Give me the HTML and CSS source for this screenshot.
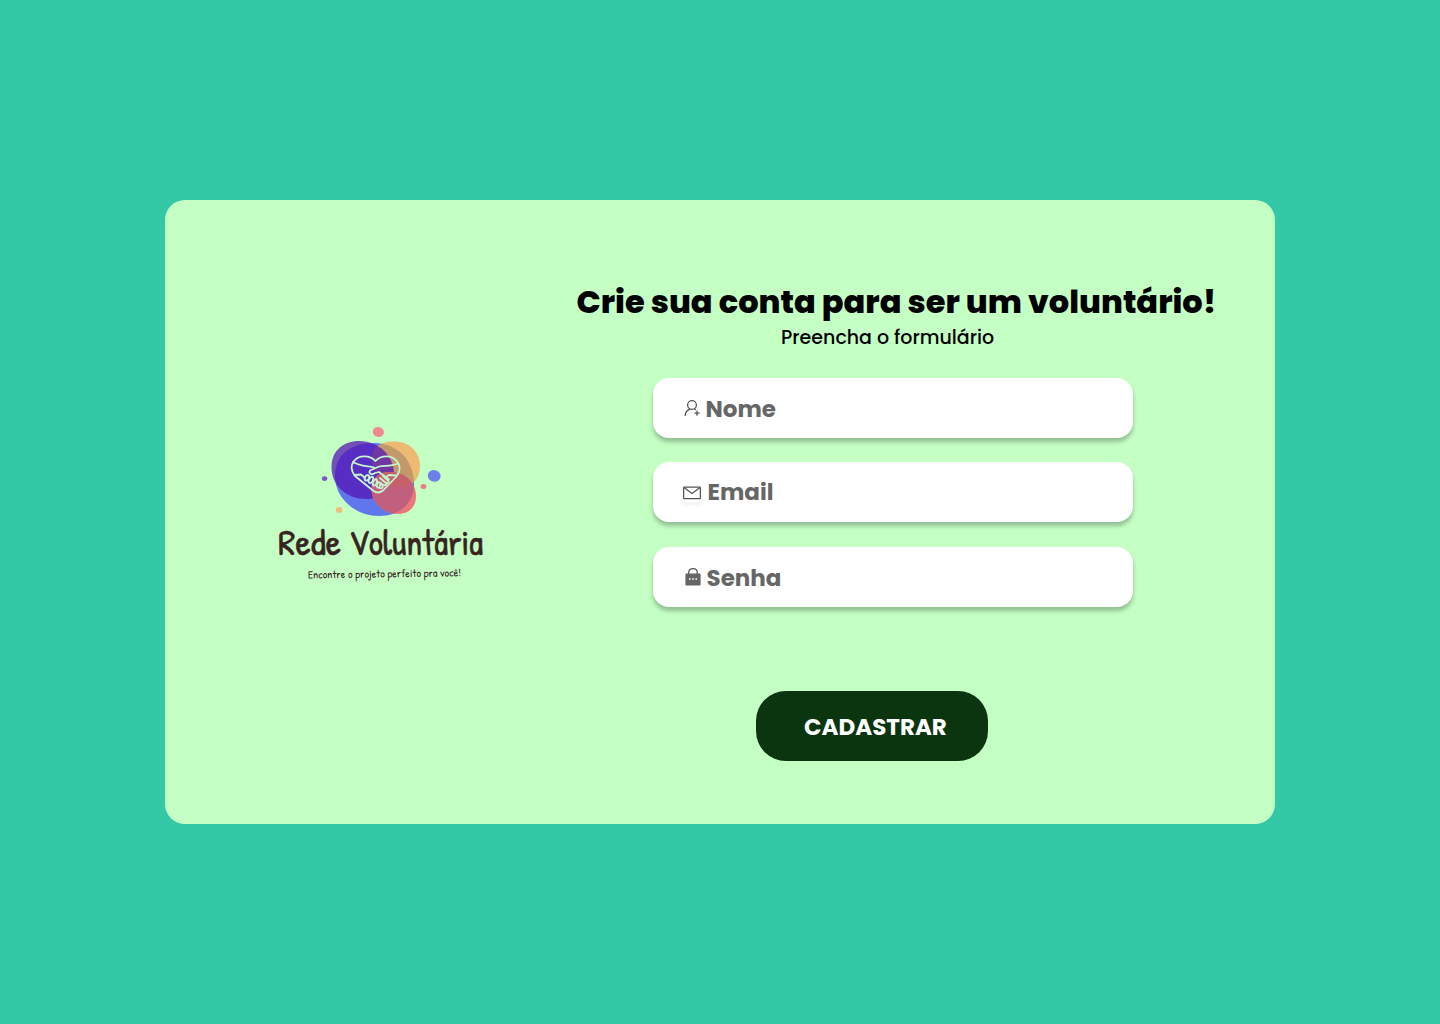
FILE: index.html
```html
<!DOCTYPE html>
<html lang="pt-BR">
<head>
<meta charset="utf-8">
<title>Rede Voluntária</title>
<link rel="stylesheet" href="styles.css">
</head>
<body>
<main class="card">
  <svg class="logo" viewBox="270 420 220 165" role="img" aria-label="Rede Voluntária">
    <defs>
      <clipPath id="blue-clip"><path d="M335 476C335 455 350 443 374 443C397 443 414 460 414 484C414 503 400 516 379 516C356 516 335 499 335 476Z"/></clipPath>
      <clipPath id="orange-clip"><path d="M372 458C372 447 382 441.500 394 441.500C409 441.500 420 451 420 467C420 480 411 487 399 487C384 487 372 474 372 458Z"/></clipPath>
    </defs>
    <path fill="#6175ed" d="M335 476C335 455 350 443 374 443C397 443 414 460 414 484C414 503 400 516 379 516C356 516 335 499 335 476Z"/>
    <path fill="#ecba73" d="M372 458C372 447 382 441.500 394 441.500C409 441.500 420 451 420 467C420 480 411 487 399 487C384 487 372 474 372 458Z"/>
    <path fill="#c3986b" clip-path="url(#blue-clip)" d="M372 458C372 447 382 441.500 394 441.500C409 441.500 420 451 420 467C420 480 411 487 399 487C384 487 372 474 372 458Z"/>
    <path fill="#5414b4" fill-opacity=".74" d="M331.500 466C332 450 344 441 359 441C379 441 394 456 394 474C394 490 382 499 366 499C347 499 331 486 331.500 466Z"/>
    <path fill="#e9777c" d="M371.500 489C371.500 478 379 472 390 472C404 472 416 482 416 496C416 507 409 514 398 514C384 514 371.500 503 371.500 489Z"/>
    <path fill="#c0607e" clip-path="url(#blue-clip)" d="M371.500 489C371.500 478 379 472 390 472C404 472 416 482 416 496C416 507 409 514 398 514C384 514 371.500 503 371.500 489Z"/>
    <path fill="#c8606c" clip-path="url(#orange-clip)" d="M371.500 489C371.500 478 379 472 390 472C404 472 416 482 416 496C416 507 409 514 398 514C384 514 371.500 503 371.500 489Z"/>
    <ellipse fill="#ef898e" cx="378.300" cy="432" rx="5.600" ry="5" transform="rotate(15 378.300 432)"/>
    <ellipse fill="#6e7eea" cx="434.200" cy="475.900" rx="6.500" ry="5.800" transform="rotate(20 434.200 475.900)"/>
    <ellipse fill="#ec7c83" cx="423.500" cy="486.500" rx="2.900" ry="2.500"/>
    <ellipse fill="#8354c6" cx="324.600" cy="478.600" rx="2.700" ry="2.400"/>
    <ellipse fill="#efbd7d" cx="339.200" cy="510" rx="3.300" ry="3"/>
    <g class="logo-line">
      <path d="M375.500 461C370 455 359 454.500 354 461C350 466 352 472 355 476L373 490.500Q378 494.500 383 490.500L396 477C400 472 401 466 397 461.500C392 454.500 381 455 375.500 461Z"/>
      <path d="M353 462C359 466 368 466 374 467.500M398 463.500C390 467 384 465 379 466.500L370 470.500C368 474 372 475 375 473L379 472L389 479.500M354.500 475L361 474.500L365 478M396 475.500L389 475L386 477"/>
      <path d="M368 475C365 475 363.500 479 365.500 480.500C368 481 371 477 368 475ZM372 476.500C369 478 367.500 482 369.500 483C372 483.500 375 478 372 476.500ZM376 479C373 480.500 371.500 484 373.500 485.500C376 486 378.500 480.500 376 479ZM379 482C376.500 484 376 486 377.500 487.500C380 488 381.500 483 379 482ZM380 478L386.500 483.500C386 486 383.500 486 381 483M383 476L388.500 481C389 483 387 484 385.500 482.500M382 485C384 488 381 489 379 487.500"/>
    </g>
    <text class="logo-name" y="554.500"><tspan x="278" textLength="63" lengthAdjust="spacingAndGlyphs">Rede</tspan><tspan x="349" textLength="134" lengthAdjust="spacingAndGlyphs">Voluntária</tspan></text>
    <text class="logo-tag" x="308" y="577.500" textLength="153" lengthAdjust="spacingAndGlyphs" transform="rotate(-.8 384 577)">Encontre o projeto perfeito pra você!</text>
  </svg>

  <form class="signup">
    <h1 class="title">Crie sua conta para ser um voluntário!</h1>
    <p class="subtitle">Preencha o formulário</p>
    <div class="fields">
      <div class="field field-name">
        <svg class="icon" viewBox="0 0 20 20"><circle cx="10" cy="7" r="4.400"/><path d="M3.200 17.900C3.200 14.200 5.500 11.900 8.300 11.100M12.500 10.900L13.800 11.900M15 12.700V17.700M12.400 15.200H17.600"/></svg>
        <span class="label">Nome</span>
      </div>
      <div class="field field-email">
        <svg class="icon icon-mail" viewBox="0 0 20 20"><rect x="1.600" y="5.100" width="16.800" height="11.600" rx=".7"/><path d="M2 5.500L10 11.500L18 5.500"/></svg>
        <span class="label">Email</span>
      </div>
      <div class="field field-password">
        <svg class="icon" viewBox="0 0 20 20"><path d="M5.700 8V5.700C5.700 .2 14.300 .2 14.300 5.700V8"/><rect class="lock-body" x="2.400" y="6.500" width="15.200" height="12" rx="1"/><path class="lock-dots" d="M6 12h1.600M9.200 12h1.600M12.400 12h1.600"/></svg>
        <span class="label">Senha</span>
      </div>
    </div>
    <button class="submit" type="button"><span class="submit-text">CADASTRAR</span></button>
  </form>
</main>
</body>
</html>
```

FILE: styles.css
```css
* { box-sizing: border-box; }

body {
  margin: 0;
  min-height: 100vh;
  display: flex;
  align-items: center;
  justify-content: center;
  background: #33c9a7;
  font-family: Poppins, Inter, sans-serif;
}

.card {
  width: 1110px;
  height: 624px;
  display: flex;
  align-items: flex-start;
  background: #c4ffc4;
  border-radius: 20px;
}

.logo {
  flex: none;
  width: 220px;
  height: 165px;
  margin: 220px 0 0 105px;
}

.logo-line {
  fill: none;
  stroke: #c4f5cc;
  stroke-width: 1.8;
  stroke-linecap: round;
  stroke-linejoin: round;
}

.logo-name, .logo-tag {
  fill: #38231f;
  font-family: "Patrick Hand", Poppins, Inter, sans-serif;
}
.logo-name {
  font-size: 35.500px;
  stroke: #38231f;
  stroke-width: .5;
}
.logo-tag { font-size: 11px; }

.signup {
  width: 640px;
  margin: 80px 0 0 87px;
  display: flex;
  flex-direction: column;
  align-items: flex-start;
}

.title {
  margin: 0 0 0 -.5px;
  height: 44px;
  line-height: 44px;
  font-size: 32px;
  font-weight: 800;
  white-space: nowrap;
  color: #000;
}

.subtitle {
  margin: 0 0 0 204px;
  height: 28px;
  line-height: 28px;
  font-size: 19px;
  font-weight: 500;
  white-space: nowrap;
  color: #000;
}

.fields {
  display: flex;
  flex-direction: column;
  margin: 26px 0 0 76px;
}

.field {
  width: 480px;
  height: 60px;
  display: flex;
  align-items: center;
  padding-left: 29px;
  background: #fff;
  border-radius: 16px;
  box-shadow: 0 4px 4px rgba(0, 0, 0, .25);
}

.field-email { margin: 24px 0 25px; }
.field-password { padding-left: 30px; }

.icon {
  width: 20px;
  height: 20px;
  fill: none;
  stroke: #555;
  stroke-width: 1.300;
}

.icon-mail { box-shadow: 0 3px 3px rgba(0, 0, 0, .05); }
.lock-body { fill: #666; stroke: none; }
.lock-dots { stroke: #fff; stroke-width: 1.600; }

.label {
  margin-left: 3.500px;
  padding-top: 2px;
  font-size: 23px;
  line-height: 34px;
  font-weight: 700;
  color: #666;
}

.field-email .label {
  margin-left: 5.500px;
  padding-top: 0;
}

.submit {
  width: 232px;
  height: 70px;
  margin: 84px 0 0 179px;
  padding: 2px 0 0 48px;
  border: 0;
  border-radius: 30px;
  background: #0a350f;
  color: #fff;
  font: inherit;
  font-size: 23px;
  font-weight: 700;
  text-align: left;
}
```
